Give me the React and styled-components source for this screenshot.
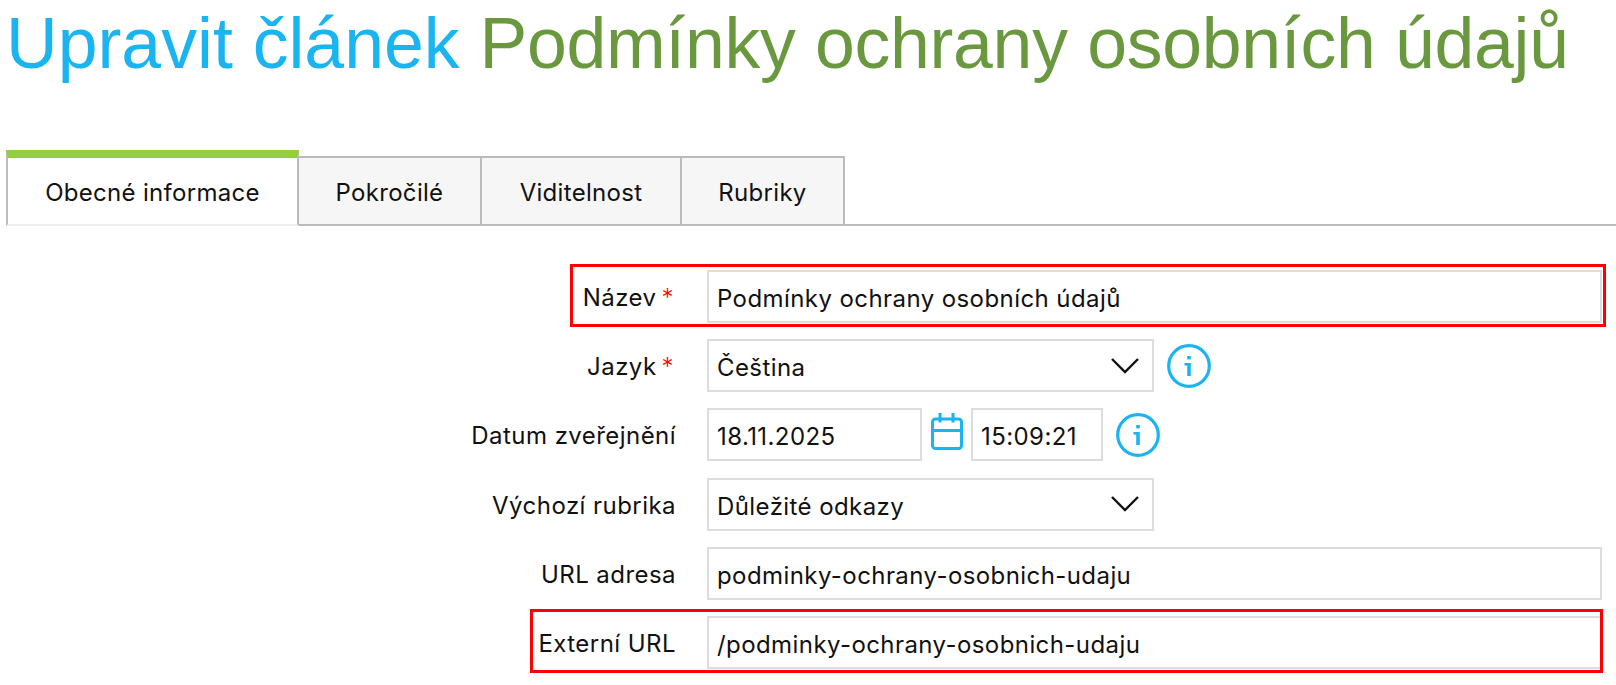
import React from 'react';
import styled, { createGlobalStyle } from 'styled-components';

const Global = createGlobalStyle`
  html, body { margin: 0; padding: 0; background: #fff; overflow: hidden; }
  body { font-family: Inter, "Liberation Sans", sans-serif; color: #111; }
`;
const Page = styled.div`
  width: 1616px; height: 685px; padding: 0 0 0 6px; box-sizing: border-box; overflow: hidden;
`;
const Title = styled.h1`
  margin: 0; height: 150px; padding: 0; font: 400 71.6px/86px "Liberation Sans", Arial, sans-serif; color: #1ab4f0; white-space: nowrap;
`;
const TitleName = styled.span` color: #6a983f; letter-spacing: -.3px; `;
const TabBar = styled.div`
  display: flex; height: 76px; box-sizing: border-box; border-bottom: 2px solid #bbb; align-items: flex-end;
`;
const Tab = styled.div`
  display: flex; align-items: center; justify-content: center; box-sizing: border-box;
  font-size: 24px; letter-spacing: .3px; color: #111; padding-top: 2px;
  height: ${p => p.$active ? '76px' : '68px'};
  width: ${p => p.$w}px;
  background: ${p => p.$active ? '#fff' : '#f6f6f6'};
  border: 2px solid #bbb;
  border-left-width: ${p => p.$active ? '2px' : '0'};
  border-top: ${p => p.$active ? '8px solid #92d040' : '2px solid #bbb'};
  border-bottom: ${p => p.$active ? '2px solid #eee' : '0'};
  margin-bottom: ${p => p.$active ? '-2px' : '0'};
`;
const Form = styled.div`
  display: flex; flex-direction: column; gap: 16.2px; padding-top: 44px;
`;
const Row = styled.div`
  position: relative; display: flex; align-items: center; height: 53px;
  &::after {
    content: ''; position: absolute; display: ${p => p.$markLeft ? 'block' : 'none'};
    left: ${p => p.$markLeft}px; right: ${p => p.$markRight}px; top: ${p => p.$markTop}px; bottom: -4px; border: 3px solid #f00; pointer-events: none;
  }
`;
const Label = styled.div`
  width: 670px; flex: none; text-align: right; font-size: 24px; letter-spacing: .45px; color: #111; white-space: nowrap; padding-top: 2px;
`;
const Star = styled.span` color: #f00; margin-left: 5px; padding-right: 2px; font-weight: 300; `;
const Field = styled.div`
  box-sizing: border-box; height: 53px; margin-left: ${p => p.$ml ?? 31}px; padding: 4px 8px 0; display: flex; align-items: center;
  justify-content: space-between; border: 2px solid #ddd; background: #fff;
  font-size: 24px; letter-spacing: .42px; color: #111; white-space: nowrap;
  width: ${p => p.$w}px;
`;
const Side = styled.svg` flex: none; margin-left: ${p => p.$ml}px; `;
const CalendarIcon = styled(Side)` margin-bottom: 5px; `;
const ChevronIcon = styled.svg` flex: none; margin: -4px 5px 0 0; `;

const Info = () => (
  <Side $ml={13} width="44" height="44" viewBox="0 0 44 44" fill="none" stroke="#1ab4f0">
    <circle cx="22" cy="22" r="20.3" strokeWidth="3.2" />
    <rect x="20.2" y="12" width="3.6" height="3.4" fill="#1ab4f0" stroke="none" />
    <path d="M22 19v13" strokeWidth="3.6" />
    <path d="M17.5 20.3h4" strokeWidth="2.6" />
  </Side>
);
const Calendar = () => (
  <CalendarIcon $ml={9} width="32" height="38" viewBox="0 0 32 38" fill="none" stroke="#1ab4f0" strokeWidth="3">
    <rect x="1.5" y="6" width="29" height="29.5" rx="3" />
    <path d="M1.5 17.5h29M9 0v9.5M22 0v9.5" />
  </CalendarIcon>
);
const Chevron = () => (
  <ChevronIcon width="28" height="16" viewBox="0 0 28 16" fill="none" stroke="#111" strokeWidth="2.4">
    <path d="M1 1L14 14L27 1" />
  </ChevronIcon>
);

export default function App() {
  return (
    <Page>
      <Global />
      <Title>Upravit článek <TitleName>Podmínky ochrany osobních údajů</TitleName></Title>
      <TabBar>
        <Tab $active $w={293}>Obecné informace</Tab>
        <Tab $w={183}>Pokročilé</Tab>
        <Tab $w={200}>Viditelnost</Tab>
        <Tab $w={163}>Rubriky</Tab>
      </TabBar>
      <Form>
        <Row $markLeft={564} $markRight={10} $markTop={-6}>
          <Label>Název<Star>*</Star></Label>
          <Field $w={895}>Podmínky ochrany osobních údajů</Field>
        </Row>
        <Row>
          <Label>Jazyk<Star>*</Star></Label>
          <Field $w={447}>Čeština<Chevron /></Field>
          <Info />
        </Row>
        <Row>
          <Label>Datum zveřejnění</Label>
          <Field $w={215}>18.11.2025</Field>
          <Calendar />
          <Field $w={132} $ml={8}>15:09:21</Field>
          <Info />
        </Row>
        <Row>
          <Label>Výchozí rubrika</Label>
          <Field $w={447}>Důležité odkazy<Chevron /></Field>
        </Row>
        <Row>
          <Label>URL adresa</Label>
          <Field $w={895}>podminky-ochrany-osobnich-udaju</Field>
        </Row>
        <Row $markLeft={524} $markRight={13} $markTop={-7}>
          <Label>Externí URL</Label>
          <Field $w={895}>/podminky-ochrany-osobnich-udaju</Field>
        </Row>
      </Form>
    </Page>
  );
}
